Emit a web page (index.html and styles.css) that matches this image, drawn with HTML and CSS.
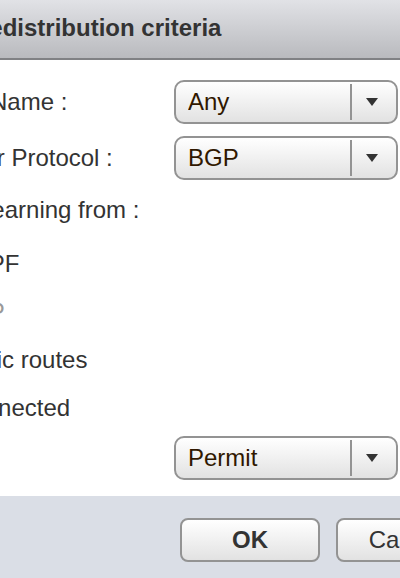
FILE: index.html
```
<!DOCTYPE html>
<html lang="en">
<head>
<meta charset="utf-8">
<title>Redistribution criteria</title>
<link rel="stylesheet" href="styles.css">
</head>
<body>
<form class="dialog">
  <header class="dialog-header"><h1>New Redistribution criteria</h1></header>
  <div class="dialog-body">
    <div class="row">
      <label for="prefix">Prefix Name :</label>
      <div class="picker">
        <select id="prefix"><option>Any</option></select>
        <svg class="arrow" viewBox="0 0 48 36" aria-hidden="true"><path class="rule" d="M0 0h2v36H0z"/><path d="M16 14h12l-6 8z"/></svg>
      </div>
    </div>
    <div class="row">
      <label for="protocol">Learner Protocol :</label>
      <div class="picker">
        <select id="protocol"><option>BGP</option></select>
        <svg class="arrow" viewBox="0 0 48 36" aria-hidden="true"><path class="rule" d="M0 0h2v36H0z"/><path d="M16 14h12l-6 8z"/></svg>
      </div>
    </div>
    <fieldset class="sources">
      <legend>Allow learning from :</legend>
      <label class="check"><input type="checkbox">OSPF</label>
      <label class="check disabled"><input type="checkbox" disabled>BGP</label>
      <label class="check"><input type="checkbox">Static routes</label>
      <label class="check"><input type="checkbox">Connected</label>
    </fieldset>
    <div class="row">
      <label for="action">Rule :</label>
      <div class="picker">
        <select id="action"><option>Permit</option></select>
        <svg class="arrow" viewBox="0 0 48 36" aria-hidden="true"><path class="rule" d="M0 0h2v36H0z"/><path d="M16 14h12l-6 8z"/></svg>
      </div>
    </div>
  </div>
  <footer class="dialog-footer">
    <button class="primary" type="button">OK</button>
    <button type="button">Cancel</button>
  </footer>
</form>
</body>
</html>
```
FILE: styles.css
```
* { box-sizing: border-box; }

body {
  margin: 0;
  overflow-x: hidden;
  background: #dadee6;
  color: #333;
  font: 24px/28px "Liberation Sans", Arial, sans-serif;
}

.dialog { margin-left: -100px; }

.dialog-header {
  padding: 14px 16px 16px;
  border-bottom: 2px solid #808184;
  background: linear-gradient(#e1e2e6, #b9babe);
}

h1 {
  margin: 0;
  font-size: 24px;
  line-height: 28px;
}

.dialog-body {
  display: flex;
  flex-direction: column;
  gap: 12px;
  padding: 20px 2px 16px 22px;
  background: #fff;
}

.row {
  display: grid;
  grid-template-columns: 252px 1fr;
  align-items: center;
}

.picker { position: relative; }

select,
button {
  height: 44px;
  border: 2px solid #939393;
  background: linear-gradient(#fff, #e2e2e2);
  font: inherit;
}

select {
  display: block;
  width: 100%;
  padding: 0 52px 0 12px;
  border-radius: 10px;
  color: #301800;
  appearance: none;
}

.arrow {
  position: absolute;
  top: 4px;
  right: 0;
  width: 48px;
  height: 36px;
  fill: #333;
  pointer-events: none;
}

.rule { fill: #939393; }

.sources {
  display: flex;
  flex-direction: column;
  gap: 20px;
  min-width: 0;
  margin: 0;
  padding: 0 0 2px;
  border: 0;
}

legend {
  float: left;
  padding: 4px 0 6px;
}

.check {
  display: flex;
  align-items: center;
  gap: 10px;
}

.check input {
  width: 22px;
  height: 22px;
  margin: 0;
}

.disabled { color: #999; }

.dialog-footer {
  display: flex;
  gap: 16px;
  padding: 22px 0 16px 280px;
}

button {
  flex: 0 0 140px;
  border-radius: 8px;
  color: #333;
}

.primary { font-weight: bold; }
```
